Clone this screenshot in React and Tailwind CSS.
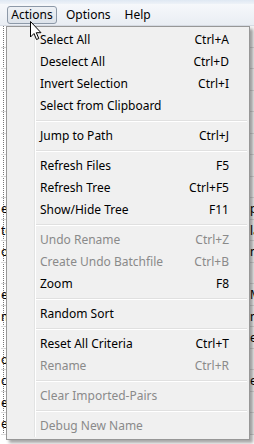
import React from 'react';

// Actions dropdown of a Win7-style file renamer
const items = [
  { label: 'Select All', key: 'Ctrl+A' },
  { label: 'Deselect All', key: 'Ctrl+D' },
  { label: 'Invert Selection', key: 'Ctrl+I' },
  { label: 'Select from Clipboard' },
  'sep',
  { label: 'Jump to Path', key: 'Ctrl+J' },
  'sep',
  { label: 'Refresh Files', key: 'F5' },
  { label: 'Refresh Tree', key: 'Ctrl+F5' },
  { label: 'Show/Hide Tree', key: 'F11' },
  'sep',
  { label: 'Undo Rename', key: 'Ctrl+Z', off: true },
  { label: 'Create Undo Batchfile', key: 'Ctrl+B', off: true },
  { label: 'Zoom', key: 'F8' },
  'sep',
  { label: 'Random Sort' },
  'sep',
  { label: 'Reset All Criteria', key: 'Ctrl+T' },
  { label: 'Rename', key: 'Ctrl+R', off: true },
  'sep',
  { label: 'Clear Imported-Pairs', off: true },
  'sep',
  { label: 'Debug New Name', off: true },
];

const leftBits = ['', '', '', '', '', '', '', '', 'eg', 'to', 'ol', '', 'e', 'm', '', 'o\'', 'c', 'el', 'er'];
const rightBits = ['', '', '', '', '', '', '', '', 'p', 'la', 'n', '', 'M', 'n', 'e', '', 'e', '', ''];

const Cursor = () => (
  <svg width="13" height="20" viewBox="0 0 13 20" className="absolute left-[30px] top-[21px]">
    <path d="M0.5 0.5 L0.5 16 L4 12.5 L6.5 18.5 L8.8 17.5 L6.3 11.7 L11 11.7 Z" fill="white" stroke="black" strokeWidth="1" strokeLinejoin="miter" />
  </svg>
);

export default function App() {
  return (
    <div className="relative w-[254px] h-[444px] overflow-hidden bg-white text-[12px] text-black" style={{ fontFamily: '"Noto Sans", "Liberation Sans", sans-serif' }}>
      {/* title strip */}
      <div className="h-[4px] bg-gradient-to-b from-[#dfe8f3] to-[#eef2f8]" />
      {/* menu bar */}
      <div className="h-[22px] flex items-center bg-gradient-to-b from-[#f6f8fb] to-[#e9edf3] border-b border-[#d6dbe3]">
        <div className="ml-[7px] h-[18px] w-[50px] flex items-center justify-center rounded-[3px] border border-[#8d99a8] bg-gradient-to-b from-[#eef1f5] to-[#dde3ea]">
          Actions
        </div>
        <div className="ml-[9px]">Options</div>
        <div className="ml-[14px]">Help</div>
      </div>

      {/* app content behind the menu */}
      <div className="flex">
        <div className="w-[7px] flex flex-col border-l border-dotted border-[#777] ml-[3px]">
          {leftBits.map((t, i) => (
            <div key={i} className="h-[21.5px] border-b border-[#d8d8d8] whitespace-nowrap overflow-hidden leading-[21px] -ml-[3px]">{t}</div>
          ))}
        </div>
        <div className="flex-1" />
        <div className="w-[8px] flex flex-col bg-[#f4f4f4]">
          {rightBits.map((t, i) => (
            <div key={i} className="h-[21.5px] border-b border-[#d8d8d8] whitespace-nowrap overflow-hidden leading-[21px] pl-[4px]">{t}</div>
          ))}
        </div>
      </div>

      {/* dropdown */}
      <div className="absolute left-[6px] top-[26px] w-[244px] border border-[#979797] bg-[#f0f0f0] py-[2px] shadow-[3px_3px_3px_rgba(0,0,0,0.35)]">
        <div className="relative">
          <div className="absolute left-[27px] top-0 bottom-0 w-[1px] bg-[#e2e3e3]" />
          <div className="absolute left-[28px] top-0 bottom-0 w-[1px] bg-white" />
          {items.map((it, i) =>
            it === 'sep' ? (
              <div key={i} className="h-[8px] flex flex-col justify-center pl-[29px] pr-[2px]">
                <div className="h-[1px] bg-[#e0e0e0]" />
                <div className="h-[1px] bg-white" />
              </div>
            ) : (
              <div key={i} className={`h-[22px] flex items-center pl-[33px] pr-[20px] ${it.off ? 'text-[#8a8a8a]' : ''}`}>
                <span className="flex-1 whitespace-nowrap">{it.label}</span>
                {it.key && <span className="whitespace-nowrap">{it.key}</span>}
              </div>
            )
          )}
        </div>
      </div>

      <Cursor />
    </div>
  );
}
